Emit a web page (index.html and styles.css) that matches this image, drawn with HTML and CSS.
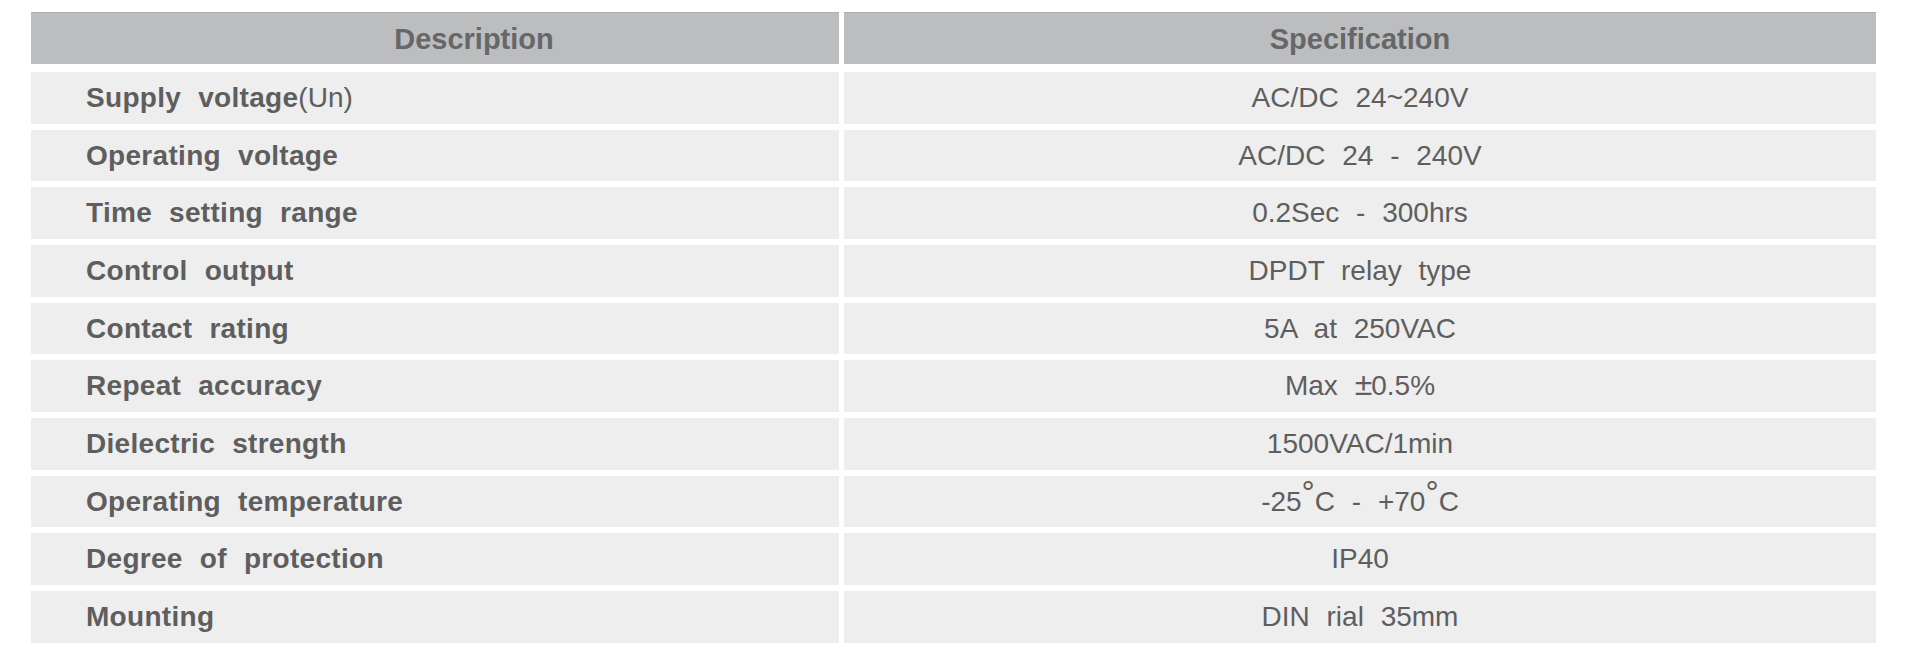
FILE: index.html
```html
<!DOCTYPE html>
<html lang="en">
<head>
<meta charset="utf-8">
<title>Specification</title>
<link rel="stylesheet" href="styles.css">
</head>
<body>
<div class="spec-table">
  <div class="head head-desc">Description</div>
  <div class="head head-spec">Specification</div>

  <div class="cell desc">Supply voltage<span class="reg">(Un)</span></div>
  <div class="cell spec">AC/DC 24~240V</div>

  <div class="cell desc">Operating voltage</div>
  <div class="cell spec">AC/DC 24 - 240V</div>

  <div class="cell desc">Time setting range</div>
  <div class="cell spec">0.2Sec - 300hrs</div>

  <div class="cell desc">Control output</div>
  <div class="cell spec">DPDT relay type</div>

  <div class="cell desc">Contact rating</div>
  <div class="cell spec">5A at 250VAC</div>

  <div class="cell desc">Repeat accuracy</div>
  <div class="cell spec">Max <span class="pm">±</span>0.5%</div>

  <div class="cell desc">Dielectric strength</div>
  <div class="cell spec">1500VAC/1min</div>

  <div class="cell desc">Operating temperature</div>
  <div class="cell spec">-25<span class="deg">°</span>C - +70<span class="deg">°</span>C</div>

  <div class="cell desc">Degree of protection</div>
  <div class="cell spec">IP40</div>

  <div class="cell desc">Mounting</div>
  <div class="cell spec">DIN rial 35mm</div>
</div>
</body>
</html>
```

FILE: styles.css
```css
html, body {
  margin: 0;
  padding: 0;
  background: #ffffff;
}

body {
  padding: 12px 0 0 31px;
  font-family: "Liberation Sans", Arial, sans-serif;
}

.spec-table {
  display: grid;
  grid-template-columns: 808px 1032px;
  grid-template-rows: 54px;
  grid-auto-rows: 51.67px;
  column-gap: 5px;
  row-gap: 6px;
  width: 1845px;
}

.head {
  display: flex;
  align-items: center;
  justify-content: center;
  background: #bcbdbf;
  border-top: 1px solid #adaeb0;
  box-sizing: border-box;
  margin-bottom: 2px;
  padding-top: 2px;
  font-size: 29px;
  font-weight: bold;
  color: #666768;
}

.head-desc {
  padding-left: 78px;
}

.cell {
  background: #eeeeee;
  font-size: 28px;
  line-height: 51.67px;
  color: #5e5e5e;
  word-spacing: 9px;
  white-space: nowrap;
}

.desc {
  padding-left: 55px;
  font-weight: bold;
  letter-spacing: 0.3px;
}

.reg {
  font-weight: normal;
  letter-spacing: 0;
}

.spec {
  text-align: center;
}

.pm {
  font-size: 32px;
  line-height: 0;
  margin-right: -1px;
}

.deg {
  position: relative;
  top: -7px;
  font-size: 33px;
  line-height: 0;
}
```
